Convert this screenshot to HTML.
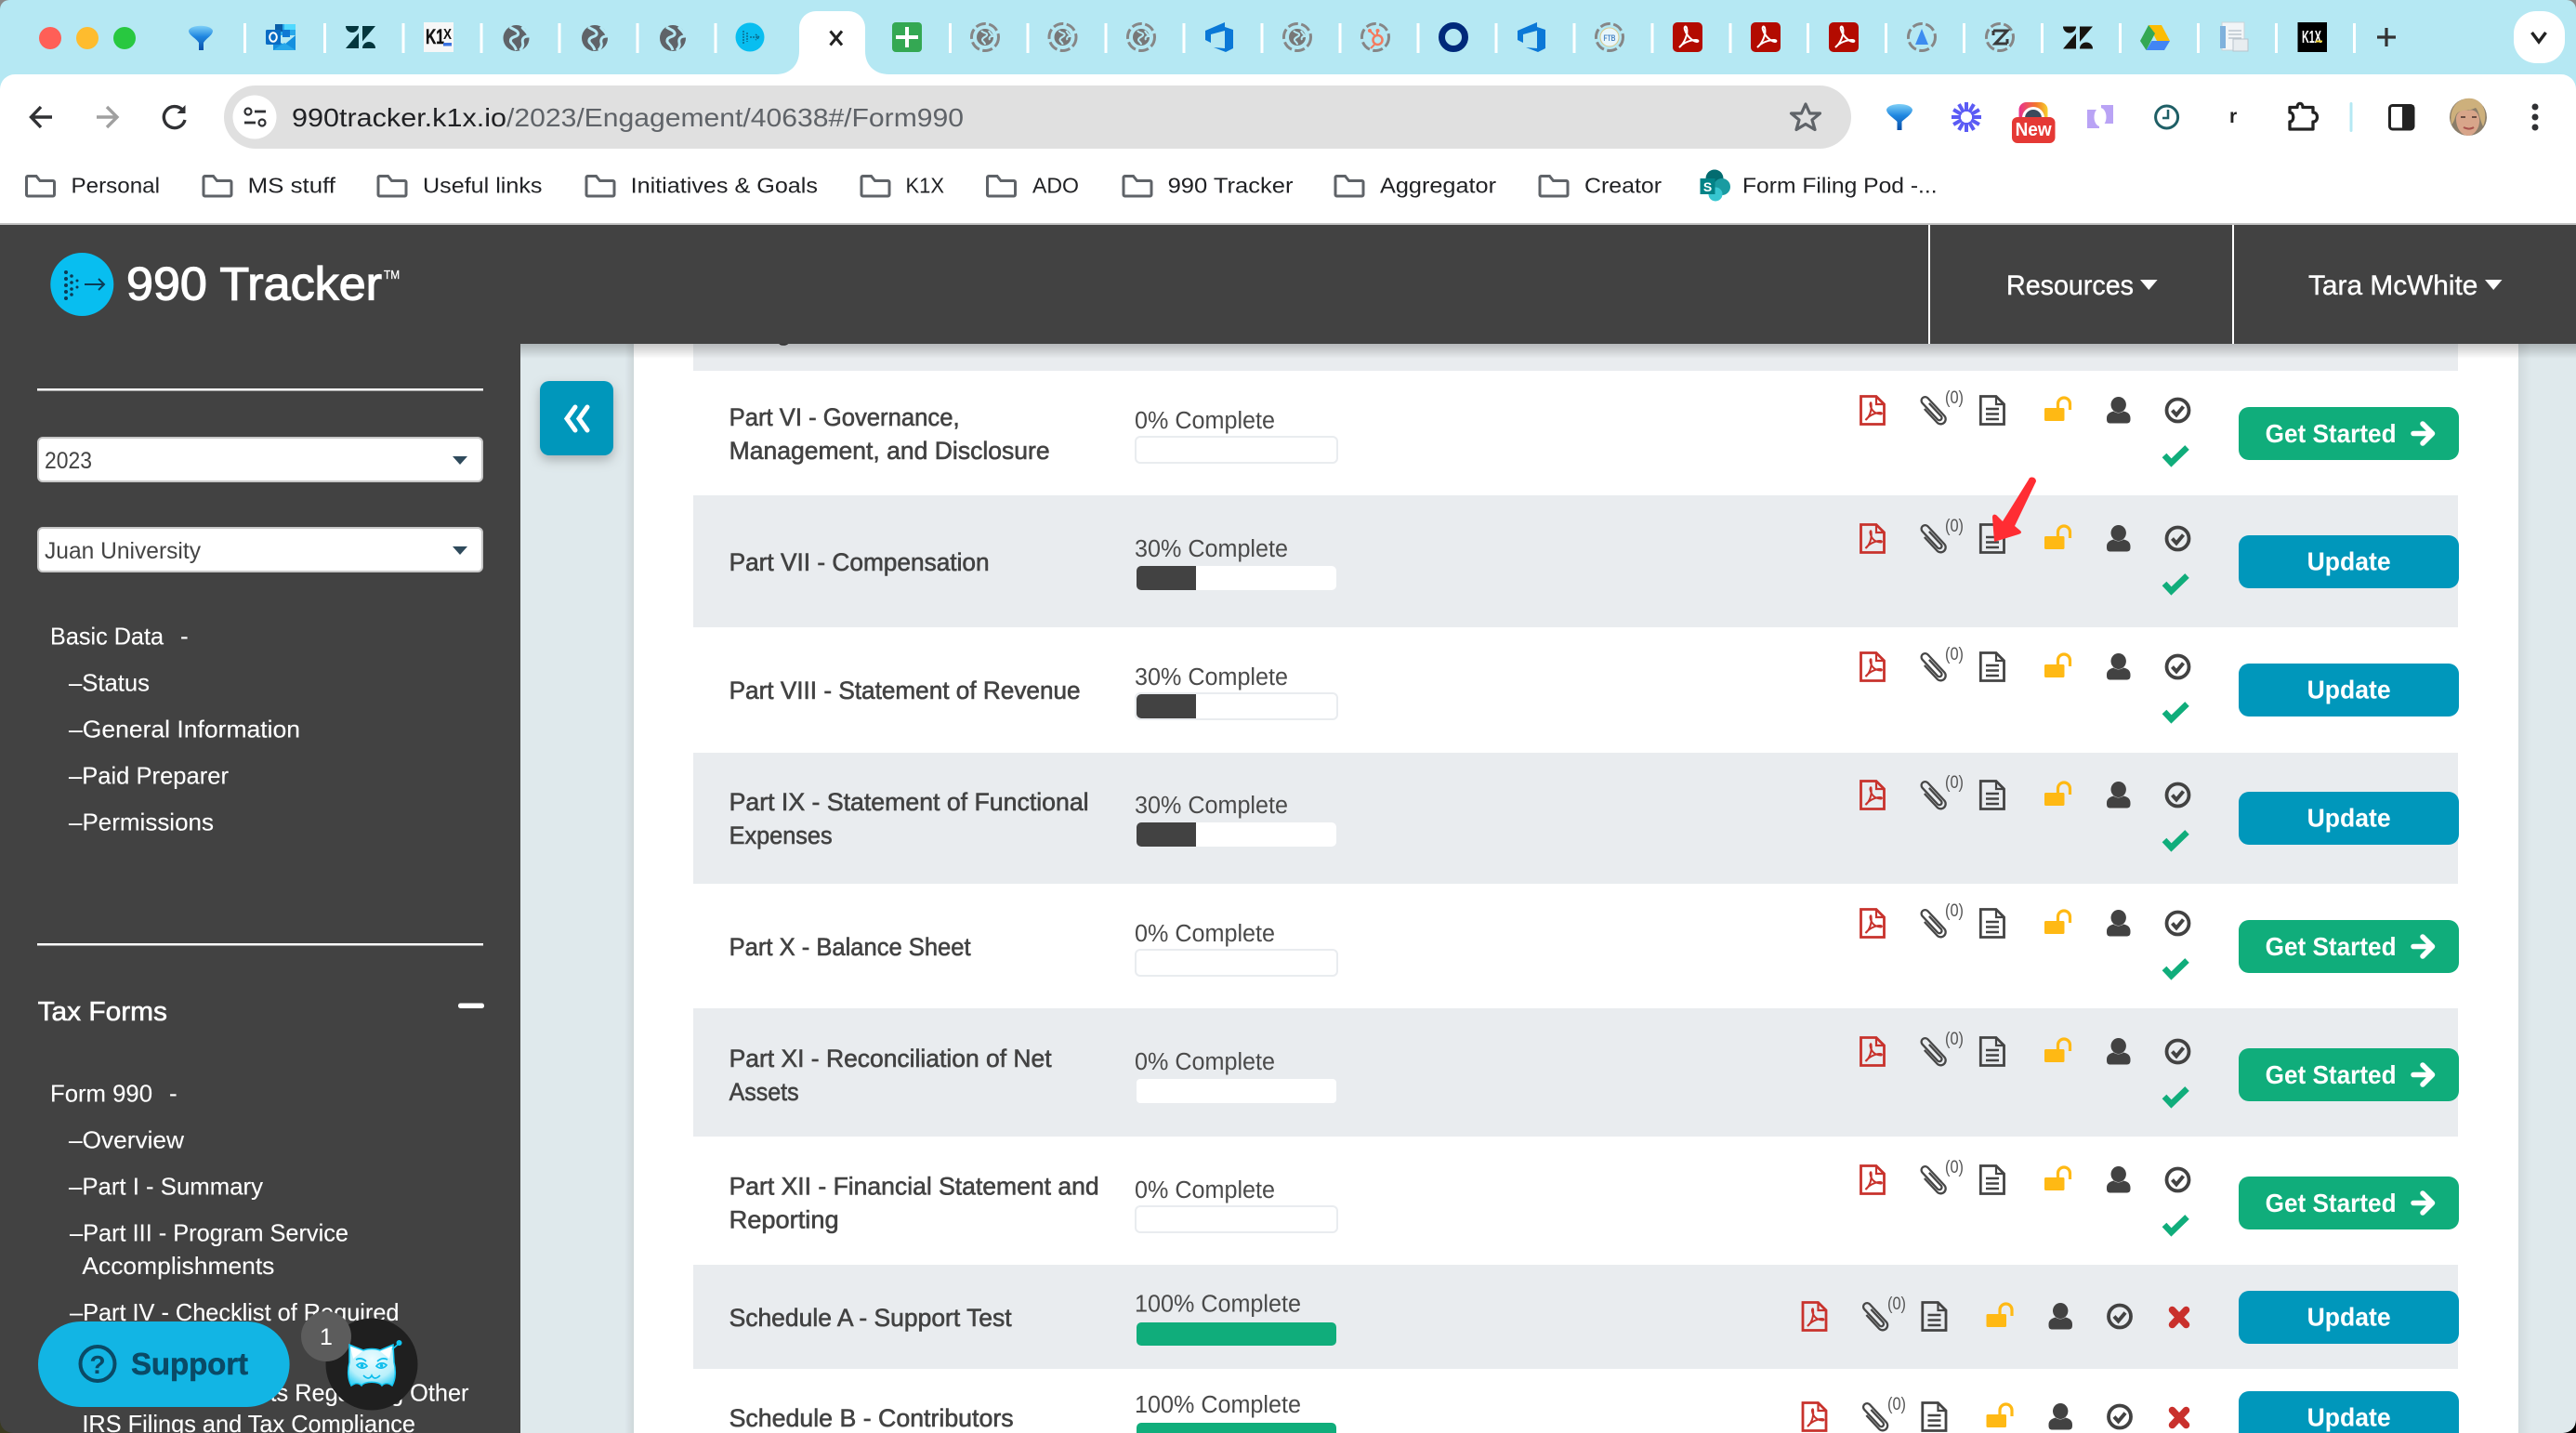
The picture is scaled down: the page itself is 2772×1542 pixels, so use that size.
<!DOCTYPE html>
<html lang="en">
<head>
<meta charset="utf-8">
<title>990 Tracker</title>
<style>
html,body{margin:0;padding:0;background:#fff;width:2772px;height:1542px;overflow:hidden}
svg{display:block;font-family:"Liberation Sans",sans-serif}
.sb{fill:#fff;font-size:26px;stroke:#fff;stroke-width:.12px}
.rt{fill:#424242;font-size:26.5px;stroke:#424242;stroke-width:.6px}
.pc{fill:#4a4a4a;font-size:25.5px}
.zr{fill:#555;font-size:19px}
.bk{fill:#202124;font-size:23px}
.bt{fill:#fff;font-size:28px;font-weight:bold}
.hd{fill:#fff;font-size:30px;stroke:#fff;stroke-width:.4px}
</style>
</head>
<body>
<svg width="2772" height="1542" viewBox="0 0 2772 1542" xmlns="http://www.w3.org/2000/svg">
<defs>
<g id="folder"><path d="M1.5 3V21.5a1.5 1.5 0 0 0 1.5 1.5H30a1.5 1.5 0 0 0 1.5-1.5V8a1.5 1.5 0 0 0-1.5-1.5H16L12 1.5H3A1.5 1.5 0 0 0 1.5 3Z" fill="none" stroke="#5f6368" stroke-width="3"/></g>
<g id="globe"><circle r="14" fill="#5f6368"/><path d="M-7-12C-3-9 3-8 2-4C1-1-5-2-6 2C-7 6-2 6 0 13M6-12C9-8 13-6 13-2C8-2 6 1 7 5C8 8 6 11 4 13" fill="none" stroke="#b5e8f3" stroke-width="3"/></g>
<g id="dring"><circle r="14.5" fill="none" stroke="#868686" stroke-width="3" stroke-dasharray="11 3.5"/></g>
<g id="dglobe"><use href="#dring"/><circle r="9" fill="#777"/><path d="M-4-7C-2-4 3-5 2-2C1 0-3 0-3 3C-3 5 0 5 0 8M4-7C5-4 8-3 8-1C5-1 4 1 5 3" fill="none" stroke="#b5e8f3" stroke-width="2"/></g>
<g id="ado"><path d="M-15-7L6-16V-11L15-8V12L7 16L-6 11L6 12V-7L-9-3V6L-15 3Z" fill="#0a78d7"/></g>
<g id="pdft"><rect x="-16" y="-16" width="32" height="32" rx="5" fill="#b30b00"/><path d="M-9 11C-4 7 1-3-1-10C-2-13-4-11-3-8C-1-2 4 4 10 5C12 5 12 3 9 3C3 3-5 6-9 11Z" fill="none" stroke="#fff" stroke-width="2"/></g>
<g id="zd"><path d="M0 0H14a7 7 0 0 1-14 0ZM14 7.500V24H0ZM18 0H32L18 16.500ZM18 24a7 7 0 0 1 14 0Z"/></g>
<g id="rowi">
<path d="M1.500 1.500H18L26.500 10V31.500H1.500Z" fill="none" stroke="#c8322c" stroke-width="2.800"/><path d="M18 1.500V10H26.500" fill="none" stroke="#c8322c" stroke-width="2.200"/>
<path d="M6.500 27C10.500 24 13.500 17 12.500 9C12.300 7.500 11.300 8.500 11.500 10.500C12.500 16 16 20 22.500 20.500C24.500 20.700 24.500 19 22 19C16 19 9.500 23 6.500 27Z" fill="none" stroke="#c8322c" stroke-width="2"/>
<g transform="translate(78.500 16.500) rotate(-43)"><path d="M2.500-8V11a2.600 2.600 0 0 1-5.200 0V-13a4 4 0 0 1 8 0V13a5.300 5.300 0 0 1-10.600 0V-7" fill="none" stroke="#474747" stroke-width="2.300"/></g>
<path d="M130.300 1.500H147L155.500 10V31.500H130.300Z" fill="none" stroke="#444" stroke-width="2.800"/><path d="M147 1.500V10H155.500" fill="none" stroke="#444" stroke-width="2.200"/>
<path d="M136 15H150M136 20.500H150M136 26H150" stroke="#444" stroke-width="2.400"/>
<rect x="199" y="14" width="21.500" height="14" rx="1.500" fill="#ffb914"/><path d="M213.500 15V9.500a6.500 6.500 0 0 1 13 0V16" fill="none" stroke="#ffb914" stroke-width="3.200"/>
<ellipse cx="278.700" cy="10.500" rx="8.200" ry="8.500" fill="#424242"/><path d="M266 26V25C266 20 270 18.500 273.500 17.500C276 20 281 20 284 17.500C288 18.500 291.500 20 291.500 25V26C291.500 29.500 290 30.500 287 30.500H270C267.500 30.500 266 29.500 266 26Z" fill="#424242"/>
<circle cx="342.500" cy="16.500" r="12" fill="none" stroke="#424242" stroke-width="3.800"/><path d="M336.500 16.500L341 21.500L348.500 12.500" fill="none" stroke="#424242" stroke-width="4"/>
</g>
<g id="ck"><path d="M0 10L7.500 18L24.500 1.500" fill="none" stroke="#10ad7b" stroke-width="6.500"/></g>
<g id="ar"><path d="M2 12.500H22M12 2L22.500 12.500L12 23" fill="none" stroke="#fff" stroke-width="5.500" stroke-linecap="round" stroke-linejoin="round"/></g>
<g id="xx"><path d="M0 0L15 16M15 0L0 16" stroke="#c9302c" stroke-width="7.500" stroke-linecap="round"/></g>
<linearGradient id="sh" x1="0" y1="0" x2="0" y2="1"><stop offset="0" stop-color="#000" stop-opacity=".22"/><stop offset="1" stop-color="#000" stop-opacity="0"/></linearGradient>
<linearGradient id="shr" x1="0" y1="0" x2="1" y2="0"><stop offset="0" stop-color="#000" stop-opacity="0"/><stop offset="1" stop-color="#000" stop-opacity=".08"/></linearGradient>
<linearGradient id="shl" x1="0" y1="0" x2="1" y2="0"><stop offset="0" stop-color="#000" stop-opacity=".06"/><stop offset="1" stop-color="#000" stop-opacity="0"/></linearGradient>
<radialGradient id="cat" cx=".5" cy=".35" r=".7"><stop offset="0" stop-color="#eafcff"/><stop offset=".7" stop-color="#b8f0fb"/><stop offset="1" stop-color="#44d4f7"/></radialGradient>
<linearGradient id="fn" x1="0" y1="0" x2="0" y2="1"><stop offset="0" stop-color="#7fd0f7"/><stop offset=".45" stop-color="#1e86e0"/><stop offset="1" stop-color="#0a4fa8"/></linearGradient>
<linearGradient id="rb" x1="0" y1="0" x2="1" y2="0"><stop offset="0" stop-color="#e8318f"/><stop offset=".6" stop-color="#f3762c"/><stop offset="1" stop-color="#f6d02e"/></linearGradient>
<filter id="bs" x="-30%" y="-30%" width="160%" height="170%"><feDropShadow dx="0" dy="5" stdDeviation="6" flood-color="#000" flood-opacity=".25"/></filter>
</defs>

<!-- page content -->
<rect x="0" y="242" width="2772" height="1300" fill="#dfe9ec"/>
<rect x="672" y="370" width="10" height="1172" fill="url(#shr)"/>
<rect x="682" y="370" width="2028" height="1172" fill="#fff"/>
<rect x="2710" y="370" width="14" height="1172" fill="url(#shl)"/>

<rect x="746" y="370" width="1899" height="29" fill="#e9ecef"/>
<rect x="746" y="533" width="1899" height="142" fill="#e9ecef"/>
<rect x="746" y="810" width="1899" height="141" fill="#e9ecef"/>
<rect x="746" y="1085" width="1899" height="138" fill="#e9ecef"/>
<rect x="746" y="1361" width="1899" height="112" fill="#e9ecef"/>

<text class="rt" x="785" y="366" textLength="80" lengthAdjust="spacingAndGlyphs">Filings</text>

<text class="rt" x="784.600" y="458" textLength="248" lengthAdjust="spacingAndGlyphs">Part VI - Governance,</text>
<text class="rt" x="784.600" y="494" textLength="345" lengthAdjust="spacingAndGlyphs">Management, and Disclosure</text>
<text class="rt" x="784.600" y="614" textLength="280" lengthAdjust="spacingAndGlyphs">Part VII - Compensation</text>
<text class="rt" x="784.600" y="752" textLength="378" lengthAdjust="spacingAndGlyphs">Part VIII - Statement of Revenue</text>
<text class="rt" x="784.600" y="872" textLength="387" lengthAdjust="spacingAndGlyphs">Part IX - Statement of Functional</text>
<text class="rt" x="784.600" y="908" textLength="111" lengthAdjust="spacingAndGlyphs">Expenses</text>
<text class="rt" x="784.600" y="1028" textLength="260" lengthAdjust="spacingAndGlyphs">Part X - Balance Sheet</text>
<text class="rt" x="784.600" y="1148" textLength="347" lengthAdjust="spacingAndGlyphs">Part XI - Reconciliation of Net</text>
<text class="rt" x="784.600" y="1184" textLength="75" lengthAdjust="spacingAndGlyphs">Assets</text>
<text class="rt" x="784.600" y="1285.500" textLength="398" lengthAdjust="spacingAndGlyphs">Part XII - Financial Statement and</text>
<text class="rt" x="784.600" y="1321.500" textLength="118" lengthAdjust="spacingAndGlyphs">Reporting</text>
<text class="rt" x="784.600" y="1427" textLength="304" lengthAdjust="spacingAndGlyphs">Schedule A - Support Test</text>
<text class="rt" x="784.600" y="1535" textLength="306" lengthAdjust="spacingAndGlyphs">Schedule B - Contributors</text>

<!-- progress -->
<text class="pc" x="1221" y="461" textLength="151" lengthAdjust="spacingAndGlyphs">0% Complete</text>
<rect x="1222" y="470" width="217" height="28" rx="5" fill="#fff" stroke="#e9ecef" stroke-width="2"/>
<text class="pc" x="1221" y="599" textLength="165" lengthAdjust="spacingAndGlyphs">30% Complete</text>
<rect x="1223" y="609" width="215" height="26" rx="5" fill="#fff"/><path d="M1287 609H1228a5 5 0 0 0-5 5V630a5 5 0 0 0 5 5H1287Z" fill="#424242"/>
<text class="pc" x="1221" y="737" textLength="165" lengthAdjust="spacingAndGlyphs">30% Complete</text>
<rect x="1222" y="746" width="217" height="28" rx="5" fill="#fff" stroke="#e9ecef" stroke-width="2"/><path d="M1287 747H1228a5 5 0 0 0-5 5V768a5 5 0 0 0 5 5H1287Z" fill="#424242"/>
<text class="pc" x="1221" y="875" textLength="165" lengthAdjust="spacingAndGlyphs">30% Complete</text>
<rect x="1223" y="885" width="215" height="26" rx="5" fill="#fff"/><path d="M1287 885H1228a5 5 0 0 0-5 5V906a5 5 0 0 0 5 5H1287Z" fill="#424242"/>
<text class="pc" x="1221" y="1013" textLength="151" lengthAdjust="spacingAndGlyphs">0% Complete</text>
<rect x="1222" y="1022" width="217" height="28" rx="5" fill="#fff" stroke="#e9ecef" stroke-width="2"/>
<text class="pc" x="1221" y="1151" textLength="151" lengthAdjust="spacingAndGlyphs">0% Complete</text>
<rect x="1222" y="1160" width="217" height="28" rx="5" fill="#fff" stroke="#e9ecef" stroke-width="2"/>
<text class="pc" x="1221" y="1289" textLength="151" lengthAdjust="spacingAndGlyphs">0% Complete</text>
<rect x="1222" y="1298" width="217" height="28" rx="5" fill="#fff" stroke="#e9ecef" stroke-width="2"/>
<text class="pc" x="1221" y="1411.500" textLength="179" lengthAdjust="spacingAndGlyphs">100% Complete</text>
<rect x="1223" y="1423" width="215" height="25" rx="5" fill="#10ad7b"/>
<text class="pc" x="1221" y="1520" textLength="179" lengthAdjust="spacingAndGlyphs">100% Complete</text>
<rect x="1223" y="1531" width="215" height="25" rx="5" fill="#10ad7b"/>

<!-- row icons -->
<use href="#rowi" transform="translate(2001 425)"/><text class="zr" x="2093" y="434" textLength="20" lengthAdjust="spacingAndGlyphs">(0)</text><use href="#ck" transform="translate(2329 480)"/>
<use href="#rowi" transform="translate(2001 563)"/><text class="zr" x="2093" y="572" textLength="20" lengthAdjust="spacingAndGlyphs">(0)</text><use href="#ck" transform="translate(2329 618)"/>
<use href="#rowi" transform="translate(2001 701)"/><text class="zr" x="2093" y="710" textLength="20" lengthAdjust="spacingAndGlyphs">(0)</text><use href="#ck" transform="translate(2329 756)"/>
<use href="#rowi" transform="translate(2001 839)"/><text class="zr" x="2093" y="848" textLength="20" lengthAdjust="spacingAndGlyphs">(0)</text><use href="#ck" transform="translate(2329 894)"/>
<use href="#rowi" transform="translate(2001 977)"/><text class="zr" x="2093" y="986" textLength="20" lengthAdjust="spacingAndGlyphs">(0)</text><use href="#ck" transform="translate(2329 1032)"/>
<use href="#rowi" transform="translate(2001 1115)"/><text class="zr" x="2093" y="1124" textLength="20" lengthAdjust="spacingAndGlyphs">(0)</text><use href="#ck" transform="translate(2329 1170)"/>
<use href="#rowi" transform="translate(2001 1253)"/><text class="zr" x="2093" y="1262" textLength="20" lengthAdjust="spacingAndGlyphs">(0)</text><use href="#ck" transform="translate(2329 1308)"/>
<use href="#rowi" transform="translate(1938.500 1400)"/><text class="zr" x="2031" y="1409" textLength="20" lengthAdjust="spacingAndGlyphs">(0)</text><use href="#xx" transform="translate(2337.500 1409.500)"/>
<use href="#rowi" transform="translate(1938.500 1508)"/><text class="zr" x="2031" y="1517" textLength="20" lengthAdjust="spacingAndGlyphs">(0)</text><use href="#xx" transform="translate(2337.500 1517.500)"/>

<!-- buttons -->
<rect x="2409" y="438" width="237" height="57" rx="11" fill="#10ad7b"/><text class="bt" x="2437.600" y="476" textLength="141" lengthAdjust="spacingAndGlyphs">Get Started</text><use href="#ar" transform="translate(2595 454)"/>
<rect x="2409" y="576" width="237" height="57" rx="11" fill="#0097bb"/><text class="bt" x="2482.600" y="613.500" textLength="90" lengthAdjust="spacingAndGlyphs">Update</text>
<rect x="2409" y="714" width="237" height="57" rx="11" fill="#0097bb"/><text class="bt" x="2482.600" y="751.500" textLength="90" lengthAdjust="spacingAndGlyphs">Update</text>
<rect x="2409" y="852" width="237" height="57" rx="11" fill="#0097bb"/><text class="bt" x="2482.600" y="889.500" textLength="90" lengthAdjust="spacingAndGlyphs">Update</text>
<rect x="2409" y="990" width="237" height="57" rx="11" fill="#10ad7b"/><text class="bt" x="2437.600" y="1028" textLength="141" lengthAdjust="spacingAndGlyphs">Get Started</text><use href="#ar" transform="translate(2595 1006)"/>
<rect x="2409" y="1128" width="237" height="57" rx="11" fill="#10ad7b"/><text class="bt" x="2437.600" y="1166" textLength="141" lengthAdjust="spacingAndGlyphs">Get Started</text><use href="#ar" transform="translate(2595 1144)"/>
<rect x="2409" y="1266" width="237" height="57" rx="11" fill="#10ad7b"/><text class="bt" x="2437.600" y="1304" textLength="141" lengthAdjust="spacingAndGlyphs">Get Started</text><use href="#ar" transform="translate(2595 1282)"/>
<rect x="2409" y="1389" width="237" height="57" rx="11" fill="#0097bb"/><text class="bt" x="2482.600" y="1426.500" textLength="90" lengthAdjust="spacingAndGlyphs">Update</text>
<rect x="2409" y="1497" width="237" height="57" rx="11" fill="#0097bb"/><text class="bt" x="2482.600" y="1534.500" textLength="90" lengthAdjust="spacingAndGlyphs">Update</text>

<!-- red arrow -->
<path d="M2183 516C2184 512 2191 513 2191 518L2168 566L2174 571C2176 573 2175 574 2172 575L2146 583L2144 557C2144 553 2147 553 2149 555L2155 561Z" fill="#ff2d33"/>

<!-- collapse -->
<rect x="581" y="410" width="79" height="80" rx="10" fill="#0097bb" filter="url(#bs)"/>
<path d="M619 438L610 450.500L619 463M632 438L623 450.500L632 463" fill="none" stroke="#fff" stroke-width="5" stroke-linecap="round"/>

<!-- shadow under header -->
<rect x="560" y="370" width="2212" height="16" fill="url(#sh)"/>

<!-- sidebar -->
<rect x="0" y="242" width="560" height="1300" fill="#424242"/>
<rect x="40" y="418" width="480" height="2.500" fill="#fff"/>
<rect x="41" y="471" width="478" height="47" rx="5" fill="#fff" stroke="#c8c8c8" stroke-width="2"/>
<text x="48" y="504" font-size="25" fill="#444" textLength="51" lengthAdjust="spacingAndGlyphs">2023</text>
<path d="M487 491H503L495 500Z" fill="#2f4a5c"/>
<rect x="41" y="568" width="478" height="47" rx="5" fill="#fff" stroke="#c8c8c8" stroke-width="2"/>
<text x="48" y="601" font-size="25" fill="#444" textLength="168" lengthAdjust="spacingAndGlyphs">Juan University</text>
<path d="M487 588H503L495 597Z" fill="#2f4a5c"/>

<text class="sb" x="54" y="693.500" textLength="122" lengthAdjust="spacingAndGlyphs">Basic Data</text><text class="sb" x="194" y="693.500">-</text>
<text class="sb" x="74" y="743.500" textLength="87" lengthAdjust="spacingAndGlyphs">–Status</text>
<text class="sb" x="74" y="793.500" textLength="249" lengthAdjust="spacingAndGlyphs">–General Information</text>
<text class="sb" x="74" y="843.500" textLength="172" lengthAdjust="spacingAndGlyphs">–Paid Preparer</text>
<text class="sb" x="74" y="893.500" textLength="156" lengthAdjust="spacingAndGlyphs">–Permissions</text>
<rect x="40" y="1015" width="480" height="2.500" fill="#fff"/>
<text x="40.600" y="1098" font-size="29" fill="#fff" stroke="#fff" stroke-width=".6" textLength="139.400" lengthAdjust="spacingAndGlyphs">Tax Forms</text>
<rect x="493" y="1079.500" width="28" height="5.500" rx="2.500" fill="#fff"/>
<text class="sb" x="54" y="1185.500" textLength="110" lengthAdjust="spacingAndGlyphs">Form 990</text><text class="sb" x="182" y="1185.500">-</text>
<text class="sb" x="74" y="1235.500" textLength="124" lengthAdjust="spacingAndGlyphs">–Overview</text>
<text class="sb" x="74" y="1285.500" textLength="209" lengthAdjust="spacingAndGlyphs">–Part I - Summary</text>
<text class="sb" x="75" y="1335.500" textLength="300" lengthAdjust="spacingAndGlyphs">–Part III - Program Service</text>
<text class="sb" x="88.400" y="1371" textLength="207" lengthAdjust="spacingAndGlyphs">Accomplishments</text>
<text class="sb" x="75" y="1421" textLength="354.500" lengthAdjust="spacingAndGlyphs">–Part IV - Checklist of Required</text>
<text class="sb" x="75" y="1507.500" textLength="429.500" lengthAdjust="spacingAndGlyphs">–Part V - Statements Regarding Other</text>
<text class="sb" x="88.400" y="1541" textLength="358.600" lengthAdjust="spacingAndGlyphs">IRS Filings and Tax Compliance</text>

<!-- support + cat -->
<circle cx="400" cy="1468" r="49.500" fill="#1f1f1f"/>
<rect x="41" y="1422" width="270.600" height="92" rx="46" fill="#12b5e4"/>
<circle cx="105" cy="1467.500" r="18.500" fill="none" stroke="#0a4a66" stroke-width="4"/>
<text x="105" y="1478" text-anchor="middle" font-size="28" font-weight="bold" fill="#0a4a66">?</text>
<text x="141" y="1479" font-size="33" font-weight="bold" fill="#0a4a66" stroke="#0a4a66" stroke-width=".5" textLength="126" lengthAdjust="spacing">Support</text>
<circle cx="351" cy="1438" r="27" fill="#5c5c5c"/>
<text x="351" y="1447" text-anchor="middle" font-size="25" fill="#fff">1</text>
<path d="M376 1447L391 1453C396 1451 404 1451 409 1453L423 1447L424 1466C426 1474 426 1484 422 1491C418 1488 414 1488 411 1491C408 1486 392 1486 389 1491C386 1488 382 1488 378 1491C374 1484 374 1474 376 1466Z" fill="url(#cat)" stroke="#12c6f2" stroke-width="1.500"/>
<path d="M377 1449L390 1454L380 1462ZM422 1449L409 1454L419 1462Z" fill="#fff"/>
<path d="M384 1469C387 1466 392 1466 395 1470C392 1473 387 1473 384 1469ZM405 1470C408 1466 413 1466 416 1469C413 1473 408 1473 405 1470ZM383 1463C387 1461 391 1462 394 1465M406 1465C409 1462 413 1461 417 1463M391 1480C395 1484 398 1484 400 1480C402 1484 405 1484 409 1480" fill="none" stroke="#0cbdec" stroke-width="1.700"/>
<circle cx="389.500" cy="1469.500" r="1.800" fill="#0cbdec"/><circle cx="410.500" cy="1469.500" r="1.800" fill="#0cbdec"/>
<path d="M422 1452L429 1446" stroke="#12c6f2" stroke-width="1.500"/><circle cx="429.500" cy="1445" r="3" fill="#12c6f2"/>

<!-- header -->
<rect x="0" y="240" width="2772" height="2" fill="#c4c4c4"/>
<rect x="0" y="242" width="2772" height="128" fill="#424242"/>
<rect x="2075" y="242" width="2" height="128" fill="#fff"/>
<rect x="2402" y="242" width="2" height="128" fill="#fff"/>
<circle cx="88.300" cy="306" r="34" fill="#08bef0"/>
<g fill="#0b3c56"><circle cx="71" cy="293" r="2"/><circle cx="71" cy="300" r="2"/><circle cx="71" cy="307" r="2"/><circle cx="71" cy="314" r="2"/><circle cx="71" cy="321" r="2"/><circle cx="77" cy="297" r="1.800"/><circle cx="77" cy="304" r="1.800"/><circle cx="77" cy="311" r="1.800"/><circle cx="77" cy="317" r="1.800"/><circle cx="83" cy="302" r="1.500"/><circle cx="83" cy="309" r="1.500"/></g>
<path d="M91 306H112M106 300L112 306L106 312" fill="none" stroke="#0b3c56" stroke-width="2"/>
<text x="136" y="322.500" font-size="50" fill="#fff" stroke="#fff" stroke-width="1.200" textLength="275" lengthAdjust="spacingAndGlyphs">990 Tracker</text>
<text x="413" y="300" font-size="13" fill="#fff" stroke="#fff" stroke-width=".3" textLength="17" lengthAdjust="spacingAndGlyphs">TM</text>
<text class="hd" x="2159" y="317" textLength="137" lengthAdjust="spacingAndGlyphs">Resources</text>
<path d="M2303 301H2321.600L2312.300 312Z" fill="#fff"/>
<text class="hd" x="2484" y="317" textLength="182.400" lengthAdjust="spacingAndGlyphs">Tara McWhite</text>
<path d="M2674 301H2692.500L2683.200 312Z" fill="#fff"/>

<!-- tab strip -->
<rect x="0" y="0" width="2772" height="100" fill="#b5e8f3"/>
<path d="M0 100V96A16 16 0 0 1 16 80H835C850 80 860 70 860 55V30A18 18 0 0 1 878 12H913A18 18 0 0 1 931 30V55C931 70 941 80 957 80H2756A16 16 0 0 1 2772 96V100Z" fill="#fff"/>
<rect x="0" y="100" width="2772" height="140" fill="#fff"/>
<circle cx="54" cy="41" r="12" fill="#ff5f57"/><circle cx="94" cy="41" r="12" fill="#febc2e"/><circle cx="134" cy="41" r="12" fill="#28c840"/>
<g fill="#fff">
<rect x="262" y="25" width="3" height="32"/><rect x="348" y="25" width="3" height="32"/><rect x="432.500" y="25" width="3" height="32"/><rect x="516.500" y="25" width="3" height="32"/><rect x="600.500" y="25" width="3" height="32"/><rect x="684.500" y="25" width="3" height="32"/><rect x="768.500" y="25" width="3" height="32"/>
<rect x="1021" y="25" width="3" height="32"/><rect x="1104.500" y="25" width="3" height="32"/><rect x="1188.500" y="25" width="3" height="32"/><rect x="1272.500" y="25" width="3" height="32"/><rect x="1356.500" y="25" width="3" height="32"/><rect x="1440.500" y="25" width="3" height="32"/><rect x="1524.500" y="25" width="3" height="32"/><rect x="1608.500" y="25" width="3" height="32"/><rect x="1692.500" y="25" width="3" height="32"/><rect x="1776.500" y="25" width="3" height="32"/><rect x="1860.500" y="25" width="3" height="32"/><rect x="1944" y="25" width="3" height="32"/><rect x="2028" y="25" width="3" height="32"/><rect x="2112" y="25" width="3" height="32"/><rect x="2196" y="25" width="3" height="32"/><rect x="2280" y="25" width="3" height="32"/><rect x="2364" y="25" width="3" height="32"/><rect x="2448" y="25" width="3" height="32"/><rect x="2532" y="25" width="3" height="32"/>
</g>
<!-- tab icons -->
<path d="M203 33C205 26 227 26 229 33C229 38 222 41 219 46V54H214V46C211 41 203 38 203 33Z" fill="url(#fn)"/>
<rect x="302" y="26" width="16" height="12" fill="#28a8ea"/><rect x="296" y="26" width="8" height="8" fill="#0a5ea8"/><rect x="306" y="26" width="12" height="6" fill="#50d9ff"/><rect x="304" y="32" width="8" height="8" fill="#0f78d4"/><path d="M294 42L306 48L318 38V54H294Z" fill="#1490df"/><path d="M294 54L306 46L318 54Z" fill="#28a8ea"/>
<rect x="286" y="32" width="16" height="16" rx="1.500" fill="#0a6cc4"/><ellipse cx="294" cy="40" rx="3.800" ry="4.800" fill="none" stroke="#fff" stroke-width="2"/>
<use href="#zd" transform="translate(372 28)" fill="#03363d"/>
<rect x="456" y="24" width="32" height="32" fill="#f7f7f7"/><text x="458" y="47" font-size="22" font-weight="bold" fill="#111" stroke="#111" stroke-width=".4" textLength="20" lengthAdjust="spacingAndGlyphs">K1</text><text x="477" y="42" font-size="16" font-weight="bold" fill="#111" textLength="9" lengthAdjust="spacingAndGlyphs">X</text><rect x="477" y="46" width="9" height="3.500" fill="#3b73e0"/>
<use href="#globe" transform="translate(555.500 41)"/><use href="#globe" transform="translate(640 41)"/><use href="#globe" transform="translate(724 41)"/>
<circle cx="807" cy="40" r="15.500" fill="#08bef0"/><path d="M800 33V47M804 35V45M807 40H817M813 37L817 40L813 43" fill="none" stroke="#0b6c8e" stroke-width="1.500" stroke-dasharray="2 1"/>
<path d="M893.500 33.500L906 48.500M906 33.500L893.500 48.500" stroke="#222" stroke-width="3"/>
<rect x="960" y="24" width="32" height="32" rx="4" fill="#34a853"/><path d="M976 29V51M964 40H988" stroke="#fff" stroke-width="4"/>
<use href="#dglobe" transform="translate(1060 40)"/><use href="#dglobe" transform="translate(1143.500 40)"/><use href="#dglobe" transform="translate(1228 40)"/>
<use href="#ado" transform="translate(1312 40)"/>
<use href="#dglobe" transform="translate(1396 40)"/>
<use href="#dring" transform="translate(1480 40)"/><path d="M1482 34V37M1474 33L1480 39" stroke="#f47b5f" stroke-width="2"/><circle cx="1482.500" cy="43" r="5" fill="none" stroke="#f47b5f" stroke-width="2.500"/><circle cx="1474" cy="33" r="2" fill="#f47b5f"/><circle cx="1482.500" cy="33" r="2" fill="#f47b5f"/><path d="M1479 48L1475 52" stroke="#f47b5f" stroke-width="2"/>
<circle cx="1564" cy="40" r="12.500" fill="none" stroke="#00297a" stroke-width="7"/>
<use href="#ado" transform="translate(1648 40)"/>
<use href="#dring" transform="translate(1732 40)"/><circle cx="1732" cy="40" r="10" fill="#e8f6fb" stroke="#d9c98a" stroke-width="1"/><text x="1732" y="44" text-anchor="middle" font-size="9" font-weight="bold" fill="#4b86c5" textLength="13" lengthAdjust="spacingAndGlyphs">FTB</text>
<use href="#pdft" transform="translate(1816 40)"/><use href="#pdft" transform="translate(1900 40)"/><use href="#pdft" transform="translate(1984 40)"/>
<use href="#dring" transform="translate(2068 40)"/><path d="M2068 31L2075 48H2061Z" fill="#3d8cf0"/>
<use href="#dring" transform="translate(2152 40)"/><path d="M2145 33H2160L2147 47H2160M2145 33V38M2160 47V42" fill="none" stroke="#3a3a3a" stroke-width="3"/>
<use href="#zd" transform="translate(2220 28.500)" fill="#17140f"/>
<path d="M2312 27H2326L2335 44H2321Z" fill="#fbbc04"/><path d="M2312 27L2303 44L2309.500 54L2319 36Z" fill="#34a853"/><path d="M2309.500 54H2329L2335 44H2315.500Z" fill="#4285f4"/>
<rect x="2391" y="24" width="24" height="30" fill="#f2f5f7" stroke="#c9d3da"/><rect x="2389" y="28" width="6" height="24" fill="#7fb1dc"/><path d="M2398 33H2412M2398 37H2412M2398 41H2412" stroke="#bcc7cf" stroke-width="1.500"/><rect x="2403" y="42" width="16" height="13" fill="#e8edf0" stroke="#b8c3cb"/>
<rect x="2472.500" y="24" width="31.500" height="32" fill="#000"/><text x="2477" y="46" font-size="18" font-weight="bold" fill="#fff" textLength="21" lengthAdjust="spacingAndGlyphs">K1X</text><rect x="2492" y="43.500" width="7" height="2" fill="#f5d738"/>
<path d="M2568 30V50M2558 40H2578" stroke="#333" stroke-width="3.200"/>
<rect x="2705" y="12" width="55" height="56" rx="24" fill="#fff"/><path d="M2724.500 35L2732 45L2739.500 35" fill="none" stroke="#222" stroke-width="3.500"/>

<!-- toolbar -->
<path d="M44 115L33.500 126L44 137M34 126H56" fill="none" stroke="#303134" stroke-width="3.400"/>
<path d="M115 115L126 126L115 137M104 126H125" fill="none" stroke="#a0a0a0" stroke-width="3.400"/>
<path d="M196.500 118.500A11.500 11.500 0 1 0 199 129" fill="none" stroke="#303134" stroke-width="3.400"/><path d="M199.500 113V122H190.500Z" fill="#303134"/>
<rect x="241" y="92" width="1751" height="68" rx="34" fill="#e0e0e0"/>
<circle cx="274" cy="126" r="23.500" fill="#fff"/>
<circle cx="267" cy="120" r="3.500" fill="none" stroke="#303134" stroke-width="2.200"/><path d="M274 120H286" stroke="#303134" stroke-width="2.800"/><path d="M263 132H275" stroke="#303134" stroke-width="2.800"/><circle cx="282" cy="132" r="3.500" fill="none" stroke="#303134" stroke-width="2.200"/>
<text x="314" y="136" font-size="28" fill="#202124" textLength="231" lengthAdjust="spacingAndGlyphs">990tracker.k1x.io</text>
<text x="545" y="136" font-size="28" fill="#5f6368" textLength="492" lengthAdjust="spacingAndGlyphs">/2023/Engagement/40638#/Form990</text>
<path d="M1943 112L1947.500 122H1958.500L1950 129L1953 139.500L1943 133.500L1933 139.500L1936 129L1927.500 122H1938.500Z" fill="none" stroke="#5f6368" stroke-width="3.200" stroke-linejoin="round"/>

<path d="M2030 118C2032 110 2056 110 2058 118C2058 123 2049 128 2046.500 131V140H2041.500V131C2039 128 2030 123 2030 118Z" fill="url(#fn)"/>
<g stroke="#5b5bf5" stroke-width="4"><path d="M2116 110V120M2116 132V142M2100 126H2110M2122 126H2132M2124 112.100L2119 120.800M2113 131.200L2108 139.900M2108 112.100L2113 120.800M2119 131.200L2124 139.900M2102.100 118L2110.800 123M2121.200 129L2129.900 134M2129.900 118L2121.200 123M2110.800 129L2102.100 134"/></g>
<path d="M2172.500 127V118A8 8 0 0 1 2180.500 110H2195.500A8 8 0 0 1 2203.500 118V127Z" fill="url(#rb)"/><path d="M2176 127A12 12 0 0 1 2200 127Z" fill="#fff"/><path d="M2179 127A9 9 0 0 1 2197 127Z" fill="#3b4a5c"/>
<rect x="2165" y="126" width="46.500" height="28" rx="6" fill="#e53935"/><text x="2168.600" y="146" font-size="20" font-weight="bold" fill="#fff" textLength="39" lengthAdjust="spacingAndGlyphs">New</text>
<path d="M2246 118H2261V113H2274V133H2259V138H2246Z" fill="#b9a3f5"/><ellipse cx="2260" cy="126" rx="6.500" ry="10" fill="#fff"/>
<circle cx="2331.600" cy="126" r="12" fill="none" stroke="#1f5f66" stroke-width="3"/><path d="M2333 118V127H2327" fill="none" stroke="#1f5f66" stroke-width="2.500"/>
<text x="2399" y="132" font-size="21" font-weight="bold" fill="#222">r</text>
<path d="M2464 115.500H2472C2472 110 2478 110 2478 115.500H2489V121C2495 121 2495 131 2489 131V139H2464V131C2469 131 2469 121 2464 121Z" fill="none" stroke="#222" stroke-width="3.300" stroke-linejoin="round"/>
<rect x="2528.500" y="110" width="3" height="32" rx="1.500" fill="#b5e8f3"/>
<rect x="2571.500" y="113.500" width="25.500" height="25.500" rx="3" fill="#fff" stroke="#222" stroke-width="3"/><rect x="2585" y="113" width="12.500" height="26" fill="#222"/>
<circle cx="2656" cy="126" r="20" fill="#8a7d6a"/><path d="M2638 134C2634 112 2650 104 2660 106C2672 108 2678 122 2672 136C2668 128 2668 120 2664 116C2656 120 2648 118 2644 122C2641 126 2642 130 2638 134Z" fill="#cdb07c"/><path d="M2643 128C2643 120 2650 118 2656 119C2661 117 2667 120 2668 128C2669 138 2662 146 2656 146C2649 146 2643 138 2643 128Z" fill="#d8a58a"/><path d="M2648 126H2653M2660 126H2665" stroke="#5a4038" stroke-width="1.800"/><path d="M2651 137C2655 139 2659 139 2662 137" stroke="#a9524c" stroke-width="2" fill="none"/>
<circle cx="2728" cy="115" r="3.500" fill="#303134"/><circle cx="2728" cy="126" r="3.500" fill="#303134"/><circle cx="2728" cy="137" r="3.500" fill="#303134"/>

<!-- bookmarks -->
<use href="#folder" transform="translate(27 188)"/><text class="bk" x="76.500" y="207.500" textLength="95.500" lengthAdjust="spacingAndGlyphs">Personal</text>
<use href="#folder" transform="translate(217.500 188)"/><text class="bk" x="266.600" y="207.500" textLength="94.400" lengthAdjust="spacingAndGlyphs">MS stuff</text>
<use href="#folder" transform="translate(405.500 188)"/><text class="bk" x="455" y="207.500" textLength="128.500" lengthAdjust="spacingAndGlyphs">Useful links</text>
<use href="#folder" transform="translate(629.500 188)"/><text class="bk" x="678.600" y="207.500" textLength="201.400" lengthAdjust="spacingAndGlyphs">Initiatives &amp; Goals</text>
<use href="#folder" transform="translate(925.500 188)"/><text class="bk" x="974.500" y="207.500" textLength="41.500" lengthAdjust="spacingAndGlyphs">K1X</text>
<use href="#folder" transform="translate(1061 188)"/><text class="bk" x="1111" y="207.500" textLength="50" lengthAdjust="spacingAndGlyphs">ADO</text>
<use href="#folder" transform="translate(1207.500 188)"/><text class="bk" x="1256.600" y="207.500" textLength="134.900" lengthAdjust="spacingAndGlyphs">990 Tracker</text>
<use href="#folder" transform="translate(1435.500 188)"/><text class="bk" x="1485" y="207.500" textLength="125" lengthAdjust="spacingAndGlyphs">Aggregator</text>
<use href="#folder" transform="translate(1655.500 188)"/><text class="bk" x="1705" y="207.500" textLength="83" lengthAdjust="spacingAndGlyphs">Creator</text>
<circle cx="1845" cy="192" r="9.500" fill="#036c70"/><circle cx="1853" cy="201" r="9" fill="#1a9ba1"/><circle cx="1846" cy="209" r="7.500" fill="#37c6d0"/><rect x="1829.500" y="192" width="16" height="17" fill="#038387"/><text x="1837.500" y="206" text-anchor="middle" font-size="14" font-weight="bold" fill="#fff">S</text>
<text class="bk" x="1875" y="207.500" textLength="209.600" lengthAdjust="spacingAndGlyphs">Form Filing Pod -...</text>

<!-- window corners -->
<path d="M0 0H10A10 10 0 0 0 0 10Z" fill="#8a8a8a"/><path d="M2772 0H2762A10 10 0 0 1 2772 10Z" fill="#8a8a8a"/>
<path d="M0 1542V1528A14 14 0 0 0 14 1542Z" fill="#3a3a20"/><path d="M2772 1542V1528A14 14 0 0 1 2758 1542Z" fill="#000"/>
</svg>
</body>
</html>
